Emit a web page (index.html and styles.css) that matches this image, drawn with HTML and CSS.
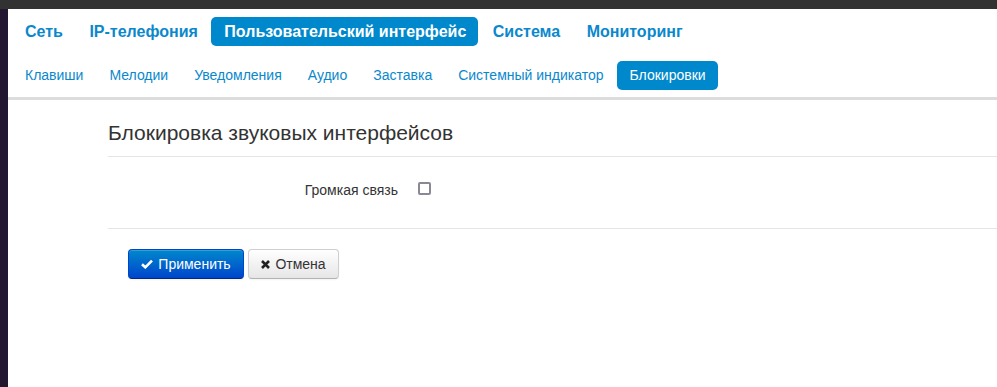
FILE: index.html
```html
<!DOCTYPE html>
<html lang="ru">
<head>
    <meta charset="UTF-8">
    <title>Блокировки</title>
    <link rel="stylesheet" href="styles.css">
</head>
<body>
    <div class="topbar"></div>
    <div class="layout">
        <div class="sidestrip"></div>
        <div class="page">
            <!-- Основное меню -->
            <ul class="nav main-nav">
                <li><a href="#">Сеть</a></li>
                <li><a href="#">IP-телефония</a></li>
                <li class="active"><a href="#">Пользовательский интерфейс</a></li>
                <li><a href="#">Система</a></li>
                <li><a href="#">Мониторинг</a></li>
            </ul>
            <!-- Подменю -->
            <ul class="nav sub-nav">
                <li><a href="#">Клавиши</a></li>
                <li><a href="#">Мелодии</a></li>
                <li><a href="#">Уведомления</a></li>
                <li><a href="#">Аудио</a></li>
                <li><a href="#">Заставка</a></li>
                <li><a href="#">Системный индикатор</a></li>
                <li class="active"><a href="#">Блокировки</a></li>
            </ul>

            <div class="content">
                <h3 class="legend">Блокировка звуковых интерфейсов</h3>
                <div class="form-row">
                    <label class="control-label" for="speaker">Громкая связь</label>
                    <div class="controls">
                        <input type="checkbox" id="speaker" class="checkbox">
                    </div>
                </div>
                <div class="form-actions">
                    <button class="btn btn-primary">
                        <svg class="icon" width="12" height="10" viewBox="0 0 12 10"><path d="M1 5.2 L4.3 8.3 L11 1.6" fill="none" stroke="#fff" stroke-width="2.6"/></svg>
                        Применить
                    </button>
                    <button class="btn btn-cancel">
                        <svg class="icon" width="9" height="9" viewBox="0 0 9 9"><path d="M1 1 L8 8 M8 1 L1 8" fill="none" stroke="#222" stroke-width="2.6"/></svg>
                        Отмена
                    </button>
                </div>
            </div>
        </div>
    </div>
</body>
</html>
```

FILE: styles.css
```css
:root {
    --link-color: #0a88cc;
    --pill-color: #0088cc;
    --text-color: #333;
}

body, html {
    margin: 0;
    padding: 0;
    height: 100%;
    font-family: "Liberation Sans", Arial, sans-serif;
    font-size: 14px;
    color: var(--text-color);
    background: #fff;
}

.topbar {
    height: 9px;
    background-color: #323232;
}

.layout {
    display: flex;
    height: calc(100% - 9px);
}

.sidestrip {
    width: 8px;
    flex-shrink: 0;
    background-color: #211731;
}

.page {
    flex: 1;
    background: #fff;
}

.nav {
    list-style: none;
    margin: 0;
    padding: 0 0 0 4px;
    display: flex;
}

.nav a {
    display: block;
    text-decoration: none;
    color: var(--link-color);
    border-radius: 5px;
}

.nav .active a {
    background-color: var(--pill-color);
    color: #fff;
}

.main-nav {
    padding-top: 8px;
    gap: 1.5px;
}

.main-nav a {
    font-size: 16px;
    font-weight: 700;
    line-height: 19px;
    padding: 5px 12px 5px 13px;
}

.sub-nav {
    gap: 1px;
    padding-top: 15px;
    border-bottom: 3px solid #dcdcdc;
    padding-bottom: 7px;
}

.sub-nav a {
    font-size: 14px;
    line-height: 17px;
    padding: 6px 12px 6px 13px;
}

.content {
    padding: 0 0 0 100px;
}

.legend {
    margin: 0;
    padding: 20px 0 11px 0;
    font-size: 21px;
    font-weight: 400;
    line-height: 25px;
    border-bottom: 1px solid #e5e5e5;
}

.form-row {
    display: grid;
    grid-template-columns: 290px 1fr;
    column-gap: 20px;
    align-items: center;
    padding: 25px 0 30px 0;
    border-bottom: 1px solid #e5e5e5;
}

.control-label {
    text-align: right;
    font-size: 14px;
    color: #333;
}

.checkbox {
    appearance: none;
    -webkit-appearance: none;
    margin: 0;
    width: 13px;
    height: 13px;
    border: 2px solid #8a8896;
    border-radius: 2px;
    box-sizing: border-box;
    display: block;
    position: relative;
    top: -2px;
}

.form-actions {
    display: flex;
    gap: 4px;
    padding: 20px 0 0 20px;
}

.btn {
    display: flex;
    align-items: center;
    justify-content: center;
    gap: 5px;
    height: 30px;
    box-sizing: border-box;
    padding: 0 12px;
    font-family: inherit;
    font-size: 14px;
    color: #333;
    background-image: linear-gradient(to bottom, #ffffff, #e6e6e6);
    border: 1px solid #cfcfcf;
    border-bottom-color: #b3b3b3;
    border-radius: 4px;
    box-shadow: inset 0 1px 0 rgba(255, 255, 255, 0.2), 0 1px 2px rgba(0, 0, 0, 0.05);
    cursor: pointer;
}

.btn-primary {
    width: 116px;
    color: #fff;
    background-image: linear-gradient(to bottom, #0088cc, #0044cc);
    border-color: #0044cc #0044cc #002a80;
}

.btn-cancel {
    width: 91px;
}
```
